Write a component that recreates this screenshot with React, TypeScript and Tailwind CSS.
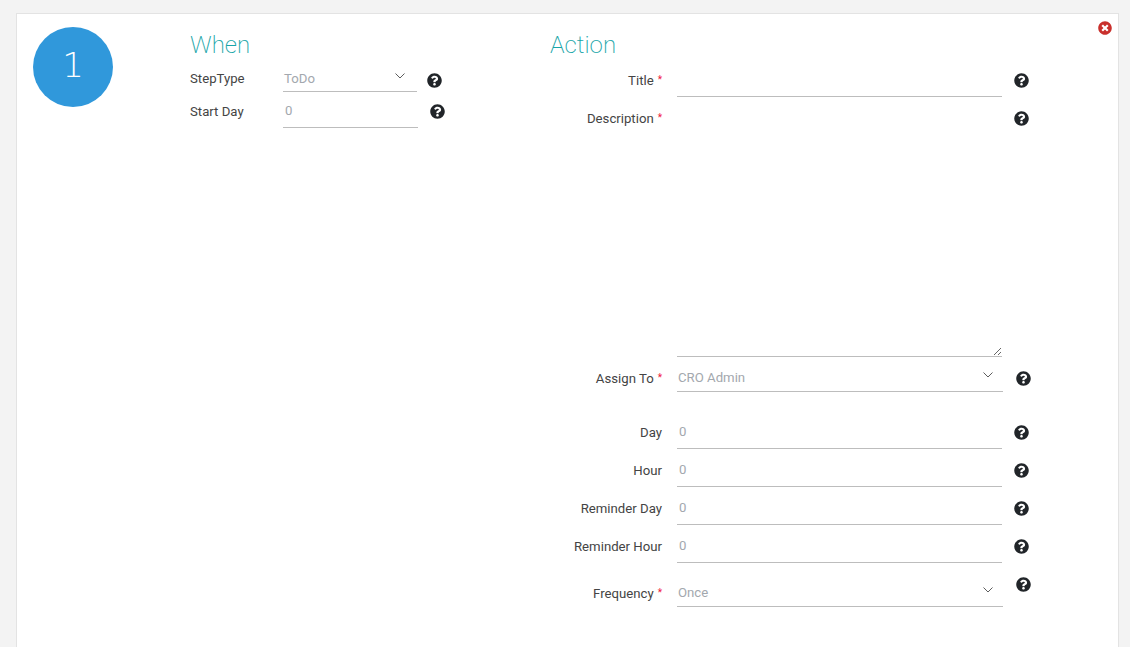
import React from "react";
import { FaQuestionCircle, FaTimesCircle } from "react-icons/fa";

const Help = ({ className = "" }: { className?: string }) => (
  <FaQuestionCircle className={`text-[15px] text-[#212529] shrink-0 ${className}`} />
);

const Chevron = () => (
  <svg width="10" height="6" viewBox="0 0 10 6" fill="none" className="block shrink-0">
    <path d="M.5.5 5 5 9.5.5" stroke="#333" strokeWidth="0.8" />
  </svg>
);

const Label = ({ text, required }: { text: string; required?: boolean }) => (
  <div className="w-[112px] shrink-0 text-right text-[13.2px] leading-[20px] text-[#444]">
    {text}
    {required && <span className="ml-[4px] align-[2px] text-[10px] text-[#f0123c]">*</span>}
  </div>
);

const NumberField = ({ text }: { text: string }) => (
  <div className="flex h-[38px] items-start">
    <div className="pt-[12px]">
      <Label text={text} />
    </div>
    <div className="ml-[15px] h-[38px] w-[325px] border-b border-[#bdbdbd] pl-[2px] pt-[11px] text-[13.2px] leading-[20px] text-[#a3a8ae]">
      0
    </div>
    <Help className="ml-[12px] mt-[14px]" />
  </div>
);

const SelectField = ({ text, value, helpClass }: { text: string; value: string; helpClass: string }) => (
  <div className="flex items-start">
    <div className="pt-[1px]">
      <Label text={text} required />
    </div>
    <div className="ml-[15px] flex h-[25px] w-[326px] items-start justify-between border-b border-[#bdbdbd] pl-[1px] pr-[10px] pt-[1px] text-[13.2px] leading-[20px] text-[#a3a8ae]">
      <span>{value}</span>
      <span className="pt-[4px]">
        <Chevron />
      </span>
    </div>
    <Help className={helpClass} />
  </div>
);

export default function App() {
  return (
    <div className="h-[647px] overflow-hidden bg-[#f3f3f3] pl-[16px] pt-[13px] font-['Roboto',sans-serif]">
      <div className="relative flex h-[700px] w-[1103px] border border-[#e3e3e3] bg-white">
        <FaTimesCircle className="absolute right-[6px] top-[7px] text-[14px] text-[#c9302c]" />

        <div className="ml-[16px] mt-[13px] flex h-[80px] w-[80px] items-center justify-center rounded-full bg-[#3098db] pb-[3px] font-['DejaVu_Sans',sans-serif] text-[34px] font-extralight text-white">
          1
        </div>

        <div className="ml-[77px] w-[360px] pt-[14px]">
          <h2 className="text-[24px] font-extralight leading-[34px] text-[#18a5a8]">When</h2>
          <div className="mt-[7px] flex items-start">
            <div className="w-[93px] text-[13.2px] leading-[20px] text-[#444]">StepType</div>
            <div className="flex h-[23px] w-[134px] items-start justify-between border-b border-[#bdbdbd] pl-[1px] pr-[12px] text-[13.2px] leading-[20px] text-[#a3a8ae]">
              <span>ToDo</span>
              <span className="pt-[4px]">
                <Chevron />
              </span>
            </div>
            <Help className="ml-[10px] mt-[4px]" />
          </div>
          <div className="flex items-start">
            <div className="w-[93px] pt-[10px] text-[13.2px] leading-[20px] text-[#444]">Start Day</div>
            <div className="h-[36px] w-[135px] border-b border-[#bdbdbd] pl-[2px] pt-[9px] text-[13.2px] leading-[20px] text-[#a3a8ae]">
              0
            </div>
            <Help className="ml-[12px] mt-[12px]" />
          </div>
        </div>

        <div className="flex flex-col pt-[14px]">
          <h2 className="text-[24px] font-extralight leading-[34px] text-[#18a5a8]">Action</h2>
          <div className="mt-[7px] flex items-start">
            <div className="pt-[1px]">
              <Label text="Title" required />
            </div>
            <div className="ml-[15px] h-[28px] w-[325px] border-b border-[#bdbdbd]" />
            <Help className="ml-[12px] mt-[4px]" />
          </div>
          <div className="flex items-start">
            <div className="pt-[11px]">
              <Label text="Description" required />
            </div>
            <textarea
              aria-label="Description"
              className="ml-[15px] block h-[260px] w-[325px] resize-y border-b border-[#bdbdbd] outline-none"
            />
            <Help className="ml-[12px] mt-[14px]" />
          </div>
          <div className="mt-[10px]">
            <SelectField text="Assign To" value="CRO Admin" helpClass="ml-[13px] mt-[4px]" />
          </div>
          <div className="mt-[19px] flex flex-col">
            <NumberField text="Day" />
            <NumberField text="Hour" />
            <NumberField text="Reminder Day" />
            <NumberField text="Reminder Hour" />
          </div>
          <div className="mt-[19px]">
            <SelectField text="Frequency" value="Once" helpClass="ml-[13px] mt-[-5px]" />
          </div>
        </div>
      </div>
    </div>
  );
}
